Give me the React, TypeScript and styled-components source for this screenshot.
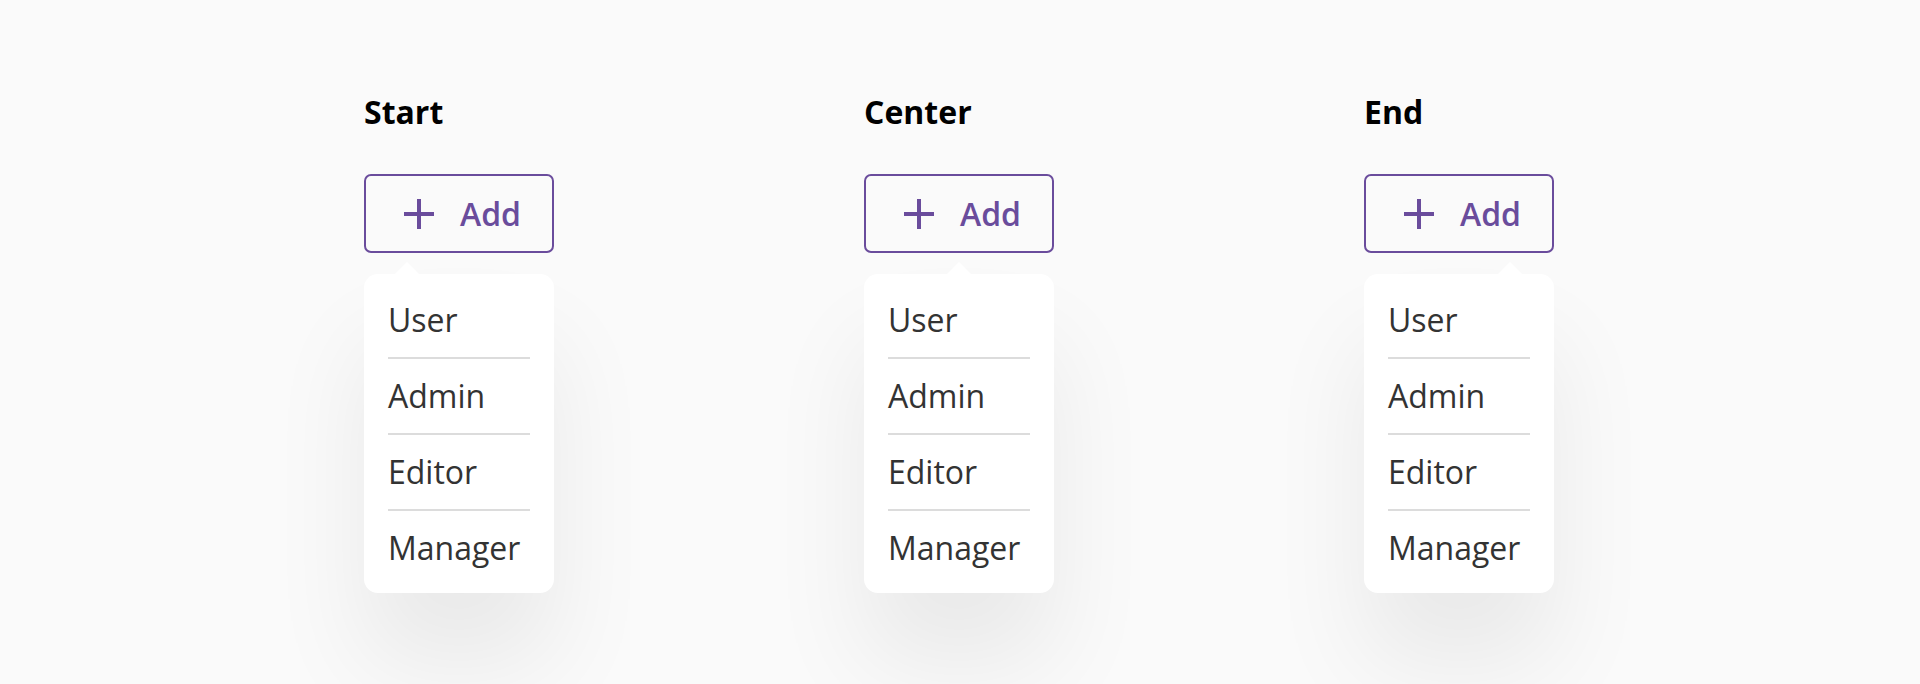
import React from "react";
import styled, { createGlobalStyle, css } from "styled-components";

type Align = "start" | "center" | "end";

const GlobalStyle = createGlobalStyle`
    html, body {
        margin: 0;
        padding: 0;
        background: #fafafa;
        font-family: "Open Sans", "Noto Sans", sans-serif;
    }
`;

const Page = styled.main`
    min-height: 684px;
    box-sizing: border-box;
    padding: 90px 2px 0 0;
    display: flex;
    justify-content: center;
    gap: 310px;
    overflow: hidden;
`;

const Column = styled.section`
    width: 190px;
    display: flex;
    flex-direction: column;
`;

const Heading = styled.h2`
    margin: 0;
    font-size: 32px;
    line-height: 44px;
    font-weight: 700;
    color: #000;
`;

const AddButton = styled.button`
    margin-top: 40px;
    width: 190px;
    height: 79px;
    box-sizing: border-box;
    display: flex;
    align-items: center;
    gap: 26px;
    padding: 0 0 0 38px;
    background: transparent;
    border: 2px solid #6a4c9c;
    border-radius: 7px;
    color: #6a4c9c;
    font-family: inherit;
    font-size: 32px;
    line-height: 44px;
    font-weight: 600;
    cursor: pointer;
`;

const arrowPlace = {
    start: css`left: 31px;`,
    center: css`left: calc(50% - 12px);`,
    end: css`right: 32px;`,
};

const Menu = styled.ul<{ $align: Align }>`
    position: relative;
    list-style: none;
    margin: 21px 0 0;
    padding: 9px 24px 8px;
    background: #fff;
    border-radius: 14px;
    box-shadow: 0 70px 100px rgba(0, 0, 0, 0.07);

    &::before {
        content: "";
        position: absolute;
        top: -12px;
        ${(p) => arrowPlace[p.$align]}
        border-left: 12px solid transparent;
        border-right: 12px solid transparent;
        border-bottom: 12px solid #fff;
    }
`;

const MenuItem = styled.li`
    padding: 15px 0;
    font-size: 32px;
    line-height: 44px;
    color: #333;

    & + & {
        border-top: 2px solid #dcdcdc;
    }
`;

const PlusIcon = () => (
    <svg width="30" height="30" viewBox="0 0 30 30" fill="none">
        <path d="M15 0v30M0 15h30" stroke="currentColor" strokeWidth="4" />
    </svg>
);

const roles = ["User", "Admin", "Editor", "Manager"];

const columns: { title: string; align: Align }[] = [
    { title: "Start", align: "start" },
    { title: "Center", align: "center" },
    { title: "End", align: "end" },
];

const App = () => {
    return (
        <>
            <GlobalStyle />
            <Page>
                {columns.map((col) => (
                    <Column key={col.title}>
                        <Heading>{col.title}</Heading>
                        <AddButton>
                            <PlusIcon />
                            Add
                        </AddButton>
                        <Menu $align={col.align}>
                            {roles.map((role) => (
                                <MenuItem key={role}>{role}</MenuItem>
                            ))}
                        </Menu>
                    </Column>
                ))}
            </Page>
        </>
    );
};

export default App;
